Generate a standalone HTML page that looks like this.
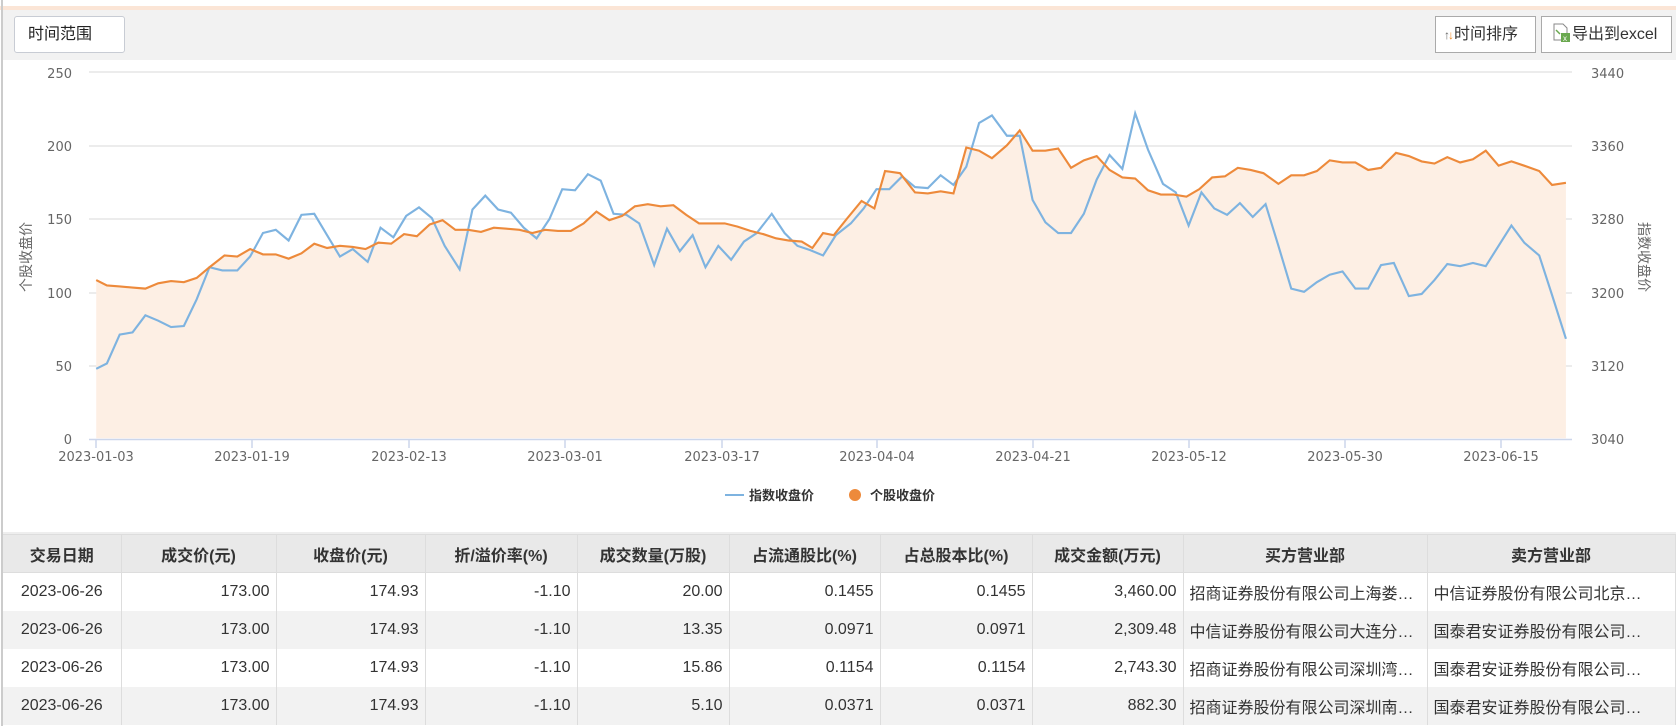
<!DOCTYPE html>
<html><head><meta charset="utf-8"><style>
*{margin:0;padding:0;box-sizing:border-box}
body{width:1676px;height:726px;overflow:hidden;background:#fff;font-family:"Liberation Sans","Noto Sans CJK SC",sans-serif;color:#333;position:relative}
.top{position:absolute;left:0;top:6px;width:1676px;height:4px;background:#fbe5d6}
.lb{position:absolute;left:1px;top:0;width:2px;height:726px;background:#ccc}
.bar{position:absolute;left:3px;top:10px;width:1673px;height:50px;background:#f2f2f2}
.btn{position:absolute;top:16px;height:37px;background:#fff;font-size:16px;line-height:35px;color:#222}
table{position:absolute;left:3px;top:534px;border-collapse:collapse;table-layout:fixed;font-size:16px}
td,th{height:38px;border-right:1px solid #ddd;white-space:nowrap;overflow:hidden;padding:0 6px}
th{background:#e9e9e9;font-weight:bold;font-size:16px;border-top:1px solid #ddd;border-bottom:1px solid #ddd;color:#333}
tr:nth-child(odd) td{background:#f2f2f2}
td{text-align:right;color:#333}
td.c{text-align:center}td.l{text-align:left;padding-left:6px}
</style></head><body>
<div class="top"></div><div class="lb"></div>
<div class="bar"></div>
<div class="btn" style="left:14px;width:111px;border:1px solid #c8ccd4;border-radius:3px;padding-left:13px">时间范围</div>
<div class="btn" style="left:1435px;width:101px;border:1px solid #aaa;padding-left:8px;color:#333"><span style="font-size:12px;color:#666">↑</span><span style="font-size:12px;color:#f08a24;margin-left:-2px">↓</span>时间排序</div>
<div class="btn" style="left:1541px;width:131px;border:1px solid #aaa;padding-left:10px;color:#333"><svg width="20" height="20" viewBox="0 0 20 20" style="vertical-align:-4px"><path d="M2 1h9l4 4v12H2z" fill="#fff" stroke="#888"/><rect x="9" y="10" width="9" height="9" fill="#6aa84f"/><text x="11" y="18" font-size="8" fill="#fff" font-family="Liberation Sans">x</text><path d="M4 7l4 4" stroke="#6aa84f" stroke-width="1.5"/></svg>导出到excel</div>

<svg style="position:absolute;left:0;top:0" width="1676" height="534">
<g stroke="#e6e6e6" stroke-width="1.5">
<line x1="89" x2="1572" y1="72" y2="72"/><line x1="89" x2="1572" y1="146" y2="146"/><line x1="89" x2="1572" y1="219" y2="219"/><line x1="89" x2="1572" y1="293" y2="293"/><line x1="89" x2="1572" y1="366" y2="366"/>
</g>
<line x1="89" x2="1572" y1="439.5" y2="439.5" stroke="#ccd6eb" stroke-width="1.5"/>
<g stroke="#ccd6eb" stroke-width="1.5"><line x1="96" x2="96" y1="440" y2="448"/><line x1="252" x2="252" y1="440" y2="448"/><line x1="409" x2="409" y1="440" y2="448"/><line x1="565" x2="565" y1="440" y2="448"/><line x1="722" x2="722" y1="440" y2="448"/><line x1="877" x2="877" y1="440" y2="448"/><line x1="1033" x2="1033" y1="440" y2="448"/><line x1="1189" x2="1189" y1="440" y2="448"/><line x1="1345" x2="1345" y1="440" y2="448"/><line x1="1501" x2="1501" y1="440" y2="448"/></g>
<g font-size="13" fill="#666" font-family="DejaVu Sans,sans-serif" text-anchor="end">
<text x="72" y="78">250</text><text x="72" y="151">200</text><text x="72" y="224">150</text><text x="72" y="298">100</text><text x="72" y="371">50</text><text x="72" y="444">0</text>
</g>
<g font-size="13" fill="#666" font-family="DejaVu Sans,sans-serif">
<text x="1591" y="78">3440</text><text x="1591" y="151">3360</text><text x="1591" y="224">3280</text><text x="1591" y="298">3200</text><text x="1591" y="371">3120</text><text x="1591" y="444">3040</text>
</g>
<g font-size="13" fill="#666" font-family="DejaVu Sans,sans-serif" text-anchor="middle">
<text x="96" y="461">2023-01-03</text><text x="252" y="461">2023-01-19</text><text x="409" y="461">2023-02-13</text><text x="565" y="461">2023-03-01</text><text x="722" y="461">2023-03-17</text><text x="877" y="461">2023-04-04</text><text x="1033" y="461">2023-04-21</text><text x="1189" y="461">2023-05-12</text><text x="1345" y="461">2023-05-30</text><text x="1501" y="461">2023-06-15</text>
</g>
<text transform="translate(31,257) rotate(-90)" text-anchor="middle" font-size="14" fill="#666" font-family="Noto Sans CJK SC,sans-serif">个股收盘价</text>
<text transform="translate(1639,257) rotate(90)" text-anchor="middle" font-size="14" fill="#666" font-family="Noto Sans CJK SC,sans-serif">指数收盘价</text>
<g transform="scale(1.0689)">
<polygon fill="#fdefe4" points="90,410 90,262 100,267 112,268 124,269 136,270 148,265 160,263 172,264 184,260 196,250 210,239 222,240 234,233 246,238 258,238 270,242 282,237 294,228 306,232 318,230 330,231 342,233 354,227 366,228 378,219 390,221 402,210 414,206 426,215 438,215 450,217 462,213 474,214 486,215 498,218 510,215 522,216 534,216 546,209 558,198 570,206 582,202 594,193 606,191 618,193 630,192 642,201 654,209 666,209 678,209 690,212 702,216 714,219 726,223 738,225 750,226 760,232 770,218 780,220 792,205 806,188 818,195 828,160 842,162 856,180 868,181 880,179 892,181 904,138 916,141 928,148 942,136 954,122 966,141 978,141 990,139 1002,157 1014,150 1026,146 1038,159 1050,166 1062,167 1074,178 1086,182 1098,182 1110,184 1122,177 1134,166 1146,165 1158,157 1170,159 1182,162 1196,172 1208,164 1220,164 1232,160 1244,150 1256,152 1268,152 1280,159 1292,157 1306,143 1318,146 1330,151 1342,153 1354,147 1366,152 1378,149 1390,141 1402,155 1414,151 1426,155 1440,160 1452,173 1465,171 1465,410"/>
<polyline fill="none" stroke="#7eb3e0" stroke-width="2" points="90,345 100,340 112,313 124,311 136,295 148,300 160,306 172,305 184,280 196,250 208,253 222,253 234,240 246,218 258,215 270,225 282,201 294,200 306,220 318,240 330,233 344,245 356,213 368,222 380,202 392,194 404,204 416,230 430,252 442,196 454,183 466,196 478,199 490,213 502,223 514,205 526,177 538,178 550,163 562,169 574,200 586,201 598,209 612,248 624,214 636,235 648,220 660,250 672,230 684,243 696,226 708,218 722,200 734,218 746,230 758,234 770,239 782,220 796,209 808,195 820,177 832,177 844,165 856,175 868,176 880,164 892,173 904,156 916,115 928,108 942,127 954,127 966,187 978,208 990,218 1002,218 1014,200 1026,168 1038,145 1050,158 1062,106 1074,140 1088,172 1100,180 1112,211 1124,180 1136,195 1148,201 1160,190 1172,203 1184,191 1196,230 1208,270 1220,273 1232,264 1244,257 1256,254 1268,270 1280,270 1292,248 1304,246 1318,277 1330,275 1342,262 1354,247 1366,249 1378,246 1390,249 1402,230 1414,211 1426,227 1440,239 1452,276 1465,317"/>
<polyline fill="none" stroke="#ed8a3b" stroke-width="2" points="90,262 100,267 112,268 124,269 136,270 148,265 160,263 172,264 184,260 196,250 210,239 222,240 234,233 246,238 258,238 270,242 282,237 294,228 306,232 318,230 330,231 342,233 354,227 366,228 378,219 390,221 402,210 414,206 426,215 438,215 450,217 462,213 474,214 486,215 498,218 510,215 522,216 534,216 546,209 558,198 570,206 582,202 594,193 606,191 618,193 630,192 642,201 654,209 666,209 678,209 690,212 702,216 714,219 726,223 738,225 750,226 760,232 770,218 780,220 792,205 806,188 818,195 828,160 842,162 856,180 868,181 880,179 892,181 904,138 916,141 928,148 942,136 954,122 966,141 978,141 990,139 1002,157 1014,150 1026,146 1038,159 1050,166 1062,167 1074,178 1086,182 1098,182 1110,184 1122,177 1134,166 1146,165 1158,157 1170,159 1182,162 1196,172 1208,164 1220,164 1232,160 1244,150 1256,152 1268,152 1280,159 1292,157 1306,143 1318,146 1330,151 1342,153 1354,147 1366,152 1378,149 1390,141 1402,155 1414,151 1426,155 1440,160 1452,173 1465,171"/>
</g>
<line x1="725" x2="744" y1="495" y2="495" stroke="#7eb3e0" stroke-width="2"/>
<text x="749" y="500" font-size="13" font-weight="bold" fill="#333" font-family="Noto Sans CJK SC,sans-serif">指数收盘价</text>
<circle cx="855" cy="495" r="6" fill="#ed8a3b"/>
<text x="870" y="500" font-size="13" font-weight="bold" fill="#333" font-family="Noto Sans CJK SC,sans-serif">个股收盘价</text>
<line x1="3" x2="1676" y1="533" y2="533" stroke="#ddd"/>
</svg>

<table>
<colgroup><col style="width:118px"><col style="width:155px"><col style="width:149px"><col style="width:152px"><col style="width:152px"><col style="width:151px"><col style="width:152px"><col style="width:151px"><col style="width:244px"><col style="width:248px"></colgroup>
<tr><th>交易日期</th><th>成交价(元)</th><th>收盘价(元)</th><th>折/溢价率(%)</th><th>成交数量(万股)</th><th>占流通股比(%)</th><th>占总股本比(%)</th><th>成交金额(万元)</th><th>买方营业部</th><th>卖方营业部</th></tr>
<tr><td class="c">2023-06-26</td><td>173.00</td><td>174.93</td><td>-1.10</td><td>20.00</td><td>0.1455</td><td>0.1455</td><td>3,460.00</td><td class="l">招商证券股份有限公司上海娄…</td><td class="l">中信证券股份有限公司北京…</td></tr>
<tr><td class="c">2023-06-26</td><td>173.00</td><td>174.93</td><td>-1.10</td><td>13.35</td><td>0.0971</td><td>0.0971</td><td>2,309.48</td><td class="l">中信证券股份有限公司大连分…</td><td class="l">国泰君安证券股份有限公司…</td></tr>
<tr><td class="c">2023-06-26</td><td>173.00</td><td>174.93</td><td>-1.10</td><td>15.86</td><td>0.1154</td><td>0.1154</td><td>2,743.30</td><td class="l">招商证券股份有限公司深圳湾…</td><td class="l">国泰君安证券股份有限公司…</td></tr>
<tr><td class="c">2023-06-26</td><td>173.00</td><td>174.93</td><td>-1.10</td><td>5.10</td><td>0.0371</td><td>0.0371</td><td>882.30</td><td class="l">招商证券股份有限公司深圳南…</td><td class="l">国泰君安证券股份有限公司…</td></tr>
</table>
</body></html>
